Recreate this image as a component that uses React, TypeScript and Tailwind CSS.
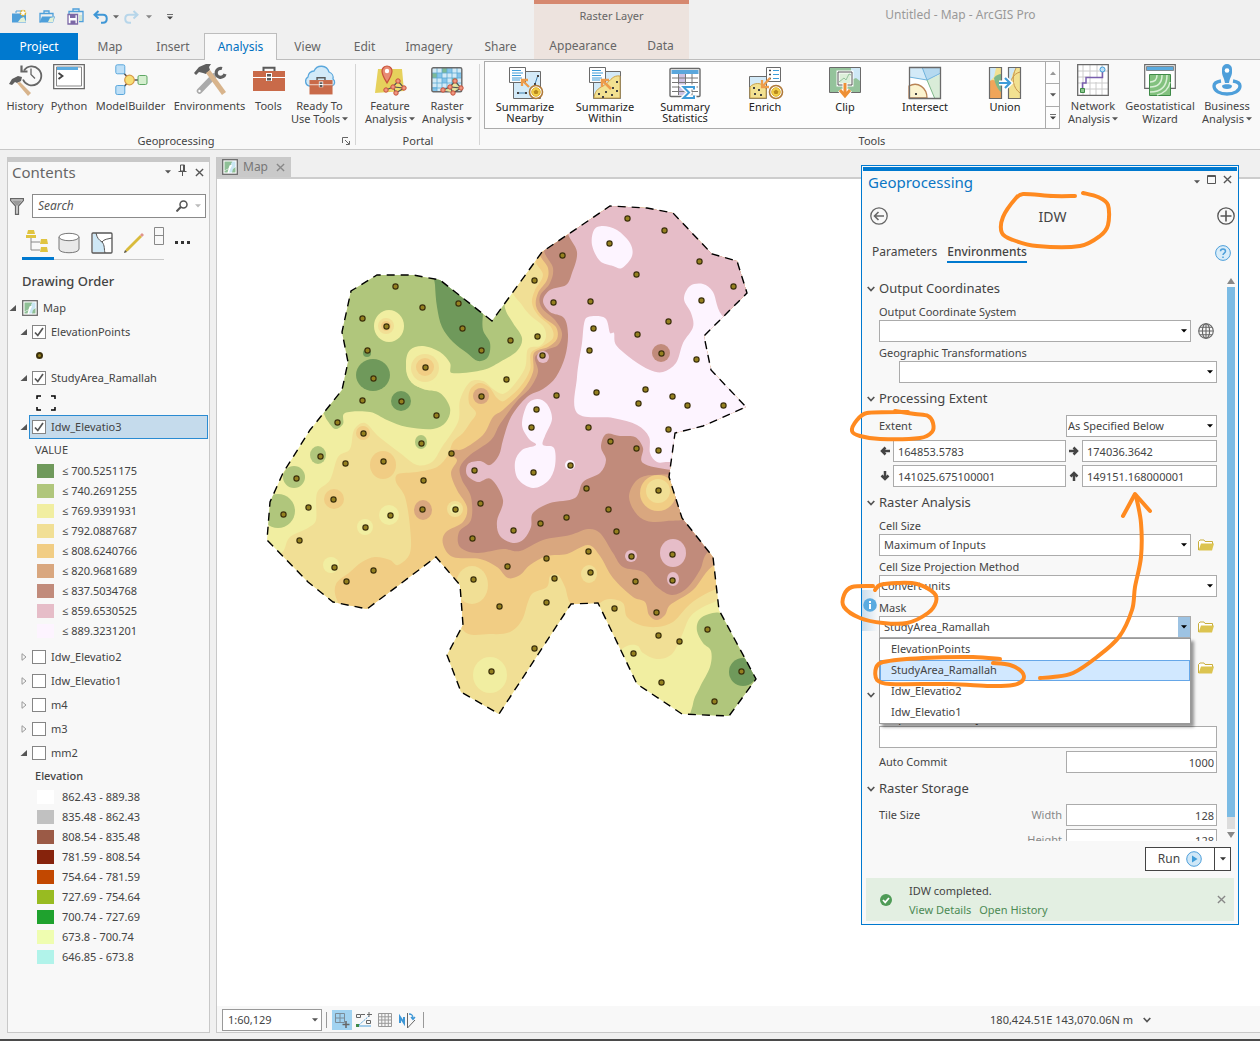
import { useState } from "react";
import type { ReactNode } from "react";
import { clsx } from "clsx";

type Pt = [number, number];

/* ---------- map data (map units are screen pixels of the view) ---------- */

const C = {
  g1: "#6f995b",
  g2: "#b0c67c",
  y1: "#f1eea1",
  y2: "#f1df95",
  o1: "#f1cd84",
  o2: "#d9a77f",
  br: "#c18b7b",
  pk: "#e6bdc8",
  wh: "#fdf4ff",
};

const outline: Pt[] = [
  [492, 321], [440, 280], [413, 275], [377, 275], [351, 291], [342, 332], [348, 362], [342, 390], [310, 430],
  [283, 473], [270, 502], [267, 540], [308, 582], [333, 602], [367, 609], [436, 557], [460, 585], [463, 625],
  [447, 655], [461, 692], [499, 714], [571, 604], [598, 603], [615, 638], [637, 684], [682, 714], [729, 716],
  [756, 679], [719, 610], [713, 557], [682, 518], [669, 477], [675, 433], [703, 426], [746, 407], [711, 370],
  [704, 336], [747, 293], [737, 261], [712, 254], [673, 213], [647, 208], [610, 206], [542, 252],
];

// Contour bands from low to high, each painted over the one before
const bands: { fill: string; pts: Pt[] }[] = [
  {
    fill: C.g2,
    pts: [
      [300, 400], [322, 412], [327, 420], [335, 429], [343, 424], [345, 413], [370, 412], [387, 420], [407, 427],
      [433, 429], [446, 422], [450, 408], [440, 393], [423, 389], [410, 380], [406, 363], [410, 350], [423, 346],
      [440, 352], [450, 363], [452, 373], [483, 370], [500, 362], [517, 351], [522, 338], [513, 323], [505, 308],
      [500, 270], [400, 240], [320, 260],
    ],
  },
  {
    fill: C.g1,
    pts: [
      [435, 270], [435, 285], [437, 307], [442, 327], [453, 342], [467, 353], [478, 361], [488, 357], [490, 343],
      [483, 330], [483, 313], [485, 290], [460, 270],
    ],
  },
  {
    fill: C.y2,
    pts: [
      [513, 286], [522, 305], [531, 316], [543, 326], [546, 337], [540, 346], [528, 349], [525, 368], [513, 386],
      [503, 394], [493, 389], [483, 381], [470, 382], [460, 400], [458, 422], [442, 447], [432, 462], [417, 465],
      [400, 453], [378, 436], [365, 423], [354, 430], [350, 449], [338, 457], [330, 480], [317, 493], [316, 520],
      [308, 528], [290, 537], [284, 550], [275, 565], [300, 640], [420, 740], [560, 740], [610, 660], [622, 649],
      [630, 645], [638, 646], [643, 653], [657, 659], [672, 654], [682, 635], [690, 617], [703, 607], [718, 600],
      [780, 560], [780, 200], [600, 180],
    ],
  },
  {
    fill: C.o1,
    pts: [
      [536, 256], [543, 275], [535, 290], [532, 303], [538, 315], [551, 327], [553, 338], [543, 346], [531, 353],
      [530, 370], [520, 387], [504, 401], [497, 398], [489, 387], [479, 383], [470, 390], [469, 403], [476, 413],
      [470, 423], [463, 433], [453, 442], [448, 455], [437, 467], [417, 472], [398, 474], [396, 482], [405, 497],
      [410, 527], [410, 553], [398, 565], [390, 560], [375, 557], [362, 562], [350, 572], [336, 584], [337, 600],
      [360, 640], [430, 590], [453, 585], [463, 630], [490, 634], [510, 632], [522, 620], [528, 602], [533, 593],
      [547, 587], [550, 576], [558, 575], [565, 587], [570, 603], [584, 620], [600, 603], [610, 599], [623, 603],
      [627, 617], [640, 625], [657, 627], [673, 622], [687, 607], [700, 597], [718, 588], [780, 560], [780, 200],
      [600, 180],
    ],
  },
  {
    fill: C.o2,
    pts: [
      [540, 248], [548, 268], [547, 280], [538, 293], [536, 306], [543, 317], [556, 327], [557, 339], [548, 347],
      [534, 353], [533, 372], [523, 390], [503, 410], [493, 417], [483, 435], [463, 449], [453, 450], [449, 454],
      [457, 460], [451, 473], [457, 490], [467, 507], [463, 522], [446, 532], [443, 544], [453, 557], [480, 559],
      [497, 567], [508, 578], [520, 575], [530, 565], [547, 556], [567, 554], [588, 545], [600, 556], [613, 578],
      [633, 597], [645, 602], [649, 615], [657, 620], [665, 615], [670, 605], [693, 590], [717, 563], [780, 540],
      [780, 200], [600, 180],
    ],
  },
  {
    fill: C.br,
    pts: [
      [545, 245], [553, 268], [550, 283], [540, 296], [542, 308], [555, 320], [562, 333], [558, 345], [546, 350],
      [535, 357], [538, 372], [530, 388], [517, 401], [500, 424], [491, 440], [470, 455], [460, 467], [462, 480],
      [471, 497], [471, 520], [459, 532], [460, 547], [477, 553], [503, 549], [520, 551], [543, 540], [570, 535],
      [588, 529], [600, 533], [613, 553], [623, 567], [643, 572], [657, 587], [672, 595], [687, 588], [700, 570],
      [708, 552], [780, 500], [780, 200], [600, 180],
    ],
  },
  {
    fill: C.pk,
    pts: [
      [568, 226], [577, 252], [572, 273], [566, 285], [550, 290], [543, 301], [550, 312], [564, 318], [568, 335],
      [565, 357], [556, 377], [543, 389], [527, 397], [511, 417], [503, 440], [499, 455], [490, 465], [480, 461],
      [468, 464], [467, 475], [478, 482], [491, 479], [503, 500], [497, 521], [500, 536], [513, 543], [524, 539],
      [531, 527], [533, 513], [550, 503], [575, 498], [583, 482], [600, 473], [606, 460], [601, 447], [606, 434],
      [620, 436], [635, 437], [643, 448], [643, 463], [672, 470], [780, 480], [780, 200], [600, 180],
    ],
  },
  {
    fill: C.wh,
    pts: [
      [588, 317], [605, 318], [610, 333], [614, 333], [616, 345], [633, 360], [650, 370], [663, 372], [676, 363],
      [683, 343], [693, 327], [691, 313], [684, 299], [690, 286], [703, 284], [713, 292], [725, 318], [780, 340],
      [780, 440], [690, 462], [668, 462], [657, 462], [650, 453], [649, 437], [637, 425], [613, 418], [577, 413],
      [577, 377], [582, 343], [584, 324],
    ],
  },
  {
    fill: C.wh,
    pts: [
      [603, 226], [594, 230], [592, 245], [600, 261], [613, 266], [622, 268], [632, 256], [630, 243], [617, 230],
    ],
  },
  {
    fill: C.wh,
    pts: [
      [537, 399], [527, 405], [522, 425], [529, 439], [536, 445], [522, 450], [515, 462], [518, 479], [533, 488],
      [548, 481], [555, 466], [554, 448], [543, 445], [545, 436], [552, 419], [547, 404],
    ],
  },
  {
    fill: C.o2,
    pts: [
      [680, 479], [653, 475], [637, 480], [629, 496], [635, 512], [647, 521], [667, 521], [690, 515],
    ],
  },
  {
    fill: C.g2,
    pts: [
      [722, 614], [709, 614], [699, 620], [697, 631], [703, 643], [711, 651], [710, 667], [700, 687], [693, 704],
      [693, 730], [760, 730], [790, 660],
    ],
  },
];

// x, y, rx, ry, fill
const spots: [number, number, number, number, string][] = [
  [389, 326, 15, 16, C.y1], [386, 326, 8, 8, C.y2], [386, 326, 5, 5, C.o1],
  [424, 368, 18, 20, C.y1], [425, 368, 14, 14, C.y2], [425, 367, 9, 9, C.o1],
  [373, 375, 17, 16, C.g1], [401, 401, 10, 10, C.g1], [367, 353, 4, 4, C.g1],
  [481, 396, 8, 8, C.o2], [363, 433, 7, 7, C.o1],
  [421, 442, 6, 7, C.g2], [318, 455, 8, 9, C.g2], [294, 477, 11, 11, C.g2], [278, 511, 17, 17, C.g2],
  [383, 465, 13, 14, C.o1], [334, 499, 10, 10, C.o1], [423, 510, 9, 10, C.o2],
  [455, 509, 8, 8, C.y2], [455, 509, 5, 5, C.y1],
  [389, 515, 10, 10, C.y1], [365, 527, 8, 8, C.y1], [331, 565, 8, 8, C.y1],
  [472, 585, 16, 19, C.y2], [490, 675, 17, 18, C.y1], [589, 574, 8, 9, C.y2],
  [658, 493, 18, 18, C.o1], [658, 491, 12, 12, C.y2],
  [661, 353, 9, 9, C.br], [543, 357, 6, 6, C.pk], [673, 553, 13, 14, C.pk],
  [673, 579, 6, 7, C.pk], [631, 556, 6, 6, C.pk], [570, 465, 5, 5, C.wh], [743, 672, 14, 14, C.g1],
];

const samples: Pt[] = [
  [395, 286], [422, 307], [458, 303], [362, 318], [386, 326], [462, 328], [510, 340], [367, 350], [481, 350],
  [425, 367], [373, 378], [506, 379], [481, 396], [362, 400], [401, 401], [436, 415], [337, 422], [363, 433],
  [421, 443], [320, 456], [627, 218], [664, 230], [609, 243], [562, 255], [699, 261], [636, 274], [534, 280],
  [733, 286], [553, 302], [590, 301], [701, 300], [668, 321], [593, 328], [637, 334], [537, 336], [589, 350],
  [661, 353], [542, 355], [696, 359], [645, 389], [596, 392], [556, 395], [672, 396], [638, 403], [687, 405],
  [723, 405], [536, 409], [531, 427], [588, 427], [668, 429], [610, 441], [636, 448], [658, 450], [296, 478],
  [345, 463], [383, 461], [451, 453], [423, 480], [474, 470], [333, 499], [308, 507], [283, 514], [422, 509],
  [455, 509], [480, 503], [390, 515], [365, 527], [299, 540], [472, 538], [513, 530], [334, 567], [373, 570],
  [346, 581], [473, 579], [507, 566], [499, 606], [491, 671], [533, 472], [570, 465], [658, 490], [586, 488],
  [540, 523], [566, 517], [608, 509], [616, 531], [588, 551], [546, 558], [631, 556], [672, 554], [590, 572],
  [554, 578], [635, 581], [672, 580], [546, 602], [614, 608], [656, 612], [658, 635], [679, 641], [707, 629],
  [534, 648], [633, 653], [661, 682], [741, 671], [714, 701],
];

// Catmull-Rom spline through the points
function smooth(pts: Pt[], closed = true) {
  const n = pts.length;
  const at = (i: number) => (closed ? pts[(i + n) % n]! : pts[Math.max(0, Math.min(n - 1, i))]!);
  let d = `M${pts[0]![0]} ${pts[0]![1]}`;
  for (let i = 0; i < (closed ? n : n - 1); i++) {
    const [a, b, c, e] = [at(i - 1), at(i), at(i + 1), at(i + 2)];
    // keep handles shorter than the segment so far-off points do not overshoot
    const len = Math.hypot(c[0] - b[0], c[1] - b[1]);
    const handle = (p: Pt, q: Pt): Pt => {
      const v: Pt = [(q[0] - p[0]) / 6, (q[1] - p[1]) / 6];
      const l = Math.hypot(v[0], v[1]) || 1;
      const k = Math.min(1, (len * 0.4) / l);
      return [v[0] * k, v[1] * k];
    };
    const h1 = handle(a, c);
    const h2 = handle(b, e);
    d += `C${b[0] + h1[0]} ${b[1] + h1[1]} ${c[0] - h2[0]} ${c[1] - h2[1]} ${c[0]} ${c[1]}`;
  }
  return closed ? d + "Z" : d;
}

function MapCanvas() {
  const ring = outline.map((p) => p.join(",")).join(" ");
  return (
    <svg
      viewBox="217 179 560 560"
      className="block h-[560px] w-[560px] shrink-0"
      role="img"
      aria-label="IDW elevation surface of the study area"
    >
      <defs>
        <clipPath id="study">
          <polygon points={ring} />
        </clipPath>
      </defs>
      <g clipPath="url(#study)">
        <rect x="217" y="179" width="560" height="560" fill={C.y1} />
        {bands.map((b, i) => (
          <path key={i} d={smooth(b.pts)} fill={b.fill} />
        ))}
        {spots.map(([x, y, rx, ry, fill], i) => (
          <ellipse key={i} cx={x} cy={y} rx={rx} ry={ry} fill={fill} />
        ))}
      </g>
      <polygon points={ring} fill="none" stroke="#000" strokeWidth="1.4" strokeDasharray="8 6" />
      {samples.map(([x, y], i) => (
        <circle key={i} cx={x + 0.5} cy={y + 0.5} r="2.6" fill="#94801f" stroke="#3d310c" strokeWidth="1.2" />
      ))}
    </svg>
  );
}

/* ---------- small glyphs ---------- */

function Caret({ className = "fill-[#555]" }: { className?: string }) {
  return (
    <svg viewBox="0 0 8 5" className={clsx("inline-block h-[4px] w-[6px] shrink-0", className)} aria-hidden>
      <path d="M0 0h8L4 4.6z" />
    </svg>
  );
}

function Cross({ className = "stroke-[#555]" }: { className?: string }) {
  return (
    <svg viewBox="0 0 10 10" className={clsx("size-[9px]", className)} fill="none" strokeWidth="1.5" aria-hidden>
      <path d="M1 1l8 8M9 1L1 9" />
    </svg>
  );
}

function MapGlyph() {
  return (
    <svg viewBox="0 0 16 16" className="size-4 shrink-0" aria-hidden>
      <rect x=".7" y=".7" width="14.6" height="14.6" fill="#fff" stroke="#6a6a6a" strokeWidth="1.3" />
      <path d="M2.500 2.500h8l-1 3-2 1-1 3-4 2z" fill="#8fbf96" />
      <path d="M10.500 2.500h3v5l-2 2-1 4H7l1-3 2-4-1-2z" fill="#c9e6f3" />
      <path d="M2.500 12l4-2-1 3.500h-3zM11 10l2.500-2v5.500H10z" fill="#8fbf96" />
    </svg>
  );
}

function Folder() {
  return (
    <svg viewBox="0 0 16 12" className="h-3 w-4 shrink-0" aria-hidden>
      <path d="M.5 11V2.500L2 1h4l1 1.500h7.500V5" fill="#fff" stroke="#c9ae3c" />
      <path d="M3 4.500h13L14 11.500H.5z" fill="#dcc450" />
    </svg>
  );
}

function Chevron() {
  return (
    <svg viewBox="0 0 8 6" className="h-[6px] w-[8px] shrink-0" fill="none" stroke="#555" strokeWidth="1.7" aria-hidden>
      <path d="M.7 1L4 4.500 7.300 1" />
    </svg>
  );
}

function Icon({ children }: { children: ReactNode }) {
  return (
    <svg viewBox="0 0 32 32" className="size-8 shrink-0 overflow-visible" fill="none" aria-hidden>
      {children}
    </svg>
  );
}

/* ---------- ribbon icons ---------- */

const toolbox = (
  <>
    <path d="M10.500 7V3.800h11V7" stroke="#5a5a5a" strokeWidth="2" />
    <path d="M0 7h32v20H0z" fill="#c96a49" />
    <path d="M0 13.500h32" stroke="#fff" strokeWidth="1" />
    <path d="M13 9h6v8h-6z" fill="#fff" />
    <path d="M14 10h4v2.500h-4zM14 14h4v2.500h-4z" fill="#5a5a5a" />
  </>
);

const pageGlyph = (
  <>
    <path d="M.5.5h16v15H.5z" fill="#fff" stroke="#6a6a6a" />
    <path d="M3 3.500h9M3 6h11M3 8.500h9M3 11h10M3 13h8" stroke="#3f9cd8" />
  </>
);

const coin = (
  <>
    <circle cx="27" cy="25" r="6.500" fill="#fff" stroke="#b07a3a" strokeWidth="1.600" />
    <circle cx="27" cy="25" r="4.300" fill="#f5d24b" stroke="#e0b32c" />
    <path d="M24.500 24.500l2.500-2 2.500 2-1 2.500h-3z" fill="#b98a1d" />
  </>
);

const cluster = (
  <>
    <path d="M12 26l7-3 5-6 6 7-8 5z" fill="#f2e27a" fillOpacity=".7" />
    <path d="M12 26l7-3 5-6 6 7-8 5-3-6 11 1" stroke="#555" strokeWidth="1.200" />
    {[[12, 26], [19, 23], [24, 17], [30, 24], [22, 29]].map(([x, y]) => (
      <circle key={x} cx={x} cy={y} r="2.200" fill="#ee9680" stroke="#c8513a" />
    ))}
  </>
);

const art = {
  history: (
    <>
      <path d="M15 6.500a9.500 9.500 0 1 1-1 9" stroke="#666" strokeWidth="1.800" />
      <path d="M12.500 1.500v6h6" stroke="#666" strokeWidth="2.200" />
      <path d="M22 4.500v6l4 4" stroke="#666" strokeWidth="1.300" />
      <path d="M0 20l3-5 6-3 4 1-1 4-4 2-2-1-3 3z" fill="#5f5f5f" />
      <path d="M8 19l3-1 11 11-3 3z" fill="#d8b48c" />
    </>
  ),
  python: (
    <>
      <path d="M.7.7h30.600v24H.7z" fill="#fff" stroke="#6a6a6a" strokeWidth="1.300" />
      <path d="M3.500 3h25v19h-25z" stroke="#888" />
      <path d="M4 3h21v3H4z" fill="#5aabe0" />
      <path d="M5.500 9l4 3-4 3" stroke="#444" strokeWidth="1.800" />
    </>
  ),
  model: (
    <>
      <path d="M8 8l5 6M8 24l5-6M19 16h7" stroke="#555" strokeWidth="1.500" />
      <rect x=".8" y=".8" width="9" height="9" rx="1.500" fill="#bfe0f7" stroke="#5aa7dc" />
      <rect x=".8" y="21.500" width="9" height="9" rx="1.500" fill="#bfe0f7" stroke="#5aa7dc" />
      <circle cx="14.500" cy="16" r="4.800" fill="#f6df75" stroke="#d89a4a" strokeWidth="1.200" />
      <rect x="23" y="11.500" width="9" height="9" rx="1.500" fill="#d5efcf" stroke="#5fa765" />
    </>
  ),
  env: (
    <>
      <path d="M5.500 27L20 12" stroke="#aaa" strokeWidth="5.500" strokeLinecap="round" />
      <circle cx="5.500" cy="27" r="1.200" fill="#fff" />
      <path d="M28 4.500a4.500 4.500 0 1 0 3 5.500" stroke="#5f5f5f" strokeWidth="3.200" />
      <path d="M0 9l5-6 7-3h5l-2 3 1 3-4 4-3-1-4-1-3 3z" fill="#5f5f5f" />
      <path d="M12 9l4-3 16 22-4 3z" fill="#d8b48c" />
    </>
  ),
  tools: toolbox,
  ready: (
    <>
      <path
        d="M5 22a5 5 0 0 1-1-9 6 6 0 0 1 6-6 8 8 0 0 1 15 1 6 6 0 0 1 4 7 4 4 0 0 1-1 7z"
        fill="#d3eaf8"
        stroke="#5aa7dc"
        strokeWidth="1.300"
      />
      <g transform="translate(5.500 11) scale(.72)">{toolbox}</g>
    </>
  ),
  feature: (
    <>
      <path d="M4 5h24l2 22-29 2z" fill="#e6d15c" />
      <path d="M13 19c-3-5-5-8-5-12a5 5 0 0 1 10 0c0 4-2 7-5 12z" fill="#e88b73" stroke="#c8513a" strokeWidth="1.200" />
      <circle cx="13" cy="7" r="2.200" fill="#fff" />
      {cluster}
    </>
  ),
  raster: (
    <>
      <path d="M1 4h30v24H1z" fill="#d2eaf6" />
      <path d="M1 9h5v5H1zM11 4h5v5h-5zM21 14h5v5h-5z" fill="#7dba98" />
      <path d="M6 9h5v5H6zM16 4h5v5h-5zM1 23h5v5H1zM26 9h5v5h-5zM11 14h5v5h-5z" fill="#86c5ea" />
      <path d="M6 4v24M11 4v24M16 4v24M21 4v24M26 4v24M1 9h30M1 14h30M1 19h30M1 24h30" stroke="#5aa9d4" strokeWidth=".8" />
      <rect x=".8" y="3.800" width="30" height="24" rx="1.500" stroke="#6a6a6a" strokeWidth="1.400" />
      {cluster}
    </>
  ),
  nearby: (
    <>
      <path d="M4.500 4.500h27v27h-27z" fill="#d3eaf8" stroke="#6a6a6a" />
      <path d="M8 26h9M29 8l-3 9" stroke="#3f7fae" />
      <path d="M8 25h2v2H8zM16 25h2v2h-2zM28 8h2v2h-2zM25 16h2v2h-2z" fill="#444" />
      {pageGlyph}
      <path d="M20 20l-6-6M13 19v-6h6" stroke="#ee9c4a" strokeWidth="2.300" />
      {coin}
    </>
  ),
  within: (
    <>
      <path d="M4.500 4.500h27v27h-27z" fill="#d3eaf8" stroke="#6a6a6a" />
      <path d="M5 31c1-9 6-10 12-14 5-4 7-9 14-8v22z" fill="#f2e191" stroke="#caa24d" />
      <path d="M9 26h2v2H9zM13 29h2v2h-2zM16 24h2v2h-2zM22 27h2v2h-2zM27 23h2v2h-2zM23 20h2v2h-2zM27 14h2v2h-2z" fill="#444" />
      {pageGlyph}
      <path d="M22 22l-8-8M13 20v-7h7" stroke="#ee9c4a" strokeWidth="2.500" />
    </>
  ),
  stats: (
    <>
      <rect x="1" y="1.500" width="30" height="28" rx="1" fill="#fff" stroke="#6a6a6a" strokeWidth="1.400" />
      <path d="M2.500 3h27v4h-27z" fill="#5aa7dc" />
      <path d="M9.500 7h7v21h-7z" fill="#cfc3e3" />
      <path d="M9.500 7v21M16.500 7v21M23 7v21M3 11h26M3 15.500h26M3 20h26M3 24.500h26" stroke="#777" />
      <path d="M25 22.500V20H14.500l5.500 5.500-5.500 5.500H25v-2.500" stroke="#fff" strokeWidth="5" />
      <path d="M25 22.500V20H14.500l5.500 5.500-5.500 5.500H25v-2.500" stroke="#3f9cd8" strokeWidth="2" />
    </>
  ),
  enrich: (
    <>
      <path d="M.5 9.500h17v22H.5z" fill="#d3eaf8" stroke="#6a6a6a" />
      <path d="M1 20c3-4 12-6 16 2v9H1z" fill="#f2e191" stroke="#caa24d" />
      <path d="M4 20h2v2H4zM9 22h2v2H9zM5 26h2v2H5zM11 27h2v2h-2z" fill="#444" />
      <path d="M17.500.5h14v14h-14z" fill="#fff" stroke="#6a6a6a" />
      <path d="M20 3.500h2M20 7.500h2M20 11.500h2" stroke="#444" strokeWidth="1.500" />
      <path d="M24 3.500h6M24 7.500h6M24 11.500h6" stroke="#3f9cd8" />
      <path d="M21 11l-7 8M13 13v7h7" stroke="#ee9c4a" strokeWidth="2.300" />
      {coin}
    </>
  ),
  clip: (
    <>
      <path d="M.5.5h31v25H.5z" fill="#94c39b" stroke="#6a6a6a" />
      <path d="M22 1h9v13l-4-3-5 2z" fill="#cfe8f6" />
      <path d="M9 5h14v13H9z" fill="#dcefd9" stroke="#fff" strokeWidth="3" />
      <path d="M9 5h14v13H9z" stroke="#555" />
      <path d="M10 15l5-4 2 2 3-6 2 1" stroke="#94c39b" />
      <path d="M16 16v12M11 23l5 6 5-6" stroke="#fff" strokeWidth="5" />
      <path d="M16 16v12M11 23l5 6 5-6" stroke="#ee9035" strokeWidth="3" />
    </>
  ),
  intersect: (
    <>
      <path d="M.5.5h31v31H.5z" fill="#fff" />
      <path d="M0 0h32v5l-14 8L0 10z" fill="#d3eaf8" />
      <path d="M13 0h19v6l-14 7z" fill="#b5d9f0" />
      <path d="M18 13l14-6v25h-6z" fill="#d9ecd8" />
      <path d="M0 10l18 3 14-7M13 0l5 13" stroke="#6fb3dd" />
      <path d="M18 13l8 19" stroke="#7fb98a" />
      <path d="M0 19c9-5 18 2 18 12H0z" fill="#fbf3cf" stroke="#b98355" strokeWidth="1.300" />
      <path d="M6 26h2v2H6z" fill="#444" />
      <path d="M.5.500h31v31H.5z" stroke="#6a6a6a" strokeWidth="1.300" />
    </>
  ),
  union: (
    <>
      <path d="M.5.5h12v31H.5z" fill="#f2e191" />
      <path d="M1 1h6L5 10l-4 4z" fill="#cfe8f6" />
      <path d="M1 14c4-3 8 0 12 12v5H1z" fill="#f0a55a" />
      <path d="M5 11c2-3 5-4 7-4v18c-4-3-6-9-7-14z" fill="#7fb98a" />
      <path d="M.5.5h12v31H.5z" stroke="#6a6a6a" strokeWidth="1.200" />
      <path d="M19.500.5h12v31h-12z" fill="#f2e191" />
      <path d="M20 1h7c-4 6-5 10-4 16l-3-2z" fill="#cfe8f6" />
      <path d="M27 1c-5 10-3 20 4 25M31 5c-7 2-9 8-11 14" stroke="#c9964e" />
      <path d="M19.500.5h12v31h-12z" stroke="#6a6a6a" strokeWidth="1.200" />
      <path d="M10 16h9M16 11l5 5-5 5" stroke="#fff" strokeWidth="5" />
      <path d="M10 16h11M16 11l5 5-5 5" stroke="#3f9cd8" strokeWidth="2.200" />
    </>
  ),
  network: (
    <>
      <path d="M.7.7h30.600v30.600H.7z" fill="#fff" />
      <path d="M6 1v30M13 1v30M20 1v12M19 18v13M25 1v30M1 7h30M1 13h13M1 19h30M6 25h25" stroke="#ccc" />
      <path d="M5.500 26v-7H9v-5.500h16.500V8" stroke="#7a5fae" strokeWidth="1.500" />
      <circle cx="25.500" cy="5.500" r="2.500" fill="#bfe0f7" stroke="#3f9cd8" />
      <path d="M3.500 24.500h4v4h-4z" fill="#8ac78c" stroke="#3f8a48" />
      <path d="M.7.7h30.600v30.600H.7z" stroke="#6a6a6a" strokeWidth="1.300" />
    </>
  ),
  geostat: (
    <>
      <path d="M.7.7h30.600v23.600H.7z" fill="#fff" stroke="#6a6a6a" strokeWidth="1.200" />
      <path d="M2.500 2.500h27v4h-27z" fill="#5aabe0" stroke="#777" strokeWidth=".8" />
      <path d="M5.500 10.500h21v21h-21z" fill="#82c17e" stroke="#3f8a48" />
      <path d="M6 18c5 0 7-2 7-7M6 23c8 0 12-4 12-12M6 28c11 0 17-6 17-17M13 31c8-2 12-7 13-13" stroke="#d9efd6" strokeWidth="1.500" />
    </>
  ),
  business: (
    <>
      <path d="M10 17c-5 .8-7 2.800-7 5 0 5 6 8 13 8s13-3 13-8c0-2.200-2-4.200-7-5" stroke="#4e9fda" strokeWidth="3.300" />
      <path d="M11 22c0-2.500 10-2.500 10 0 0 2-2 3-5 3s-5-1-5-3z" fill="#4e9fda" />
      <path d="M11 5a5 5 0 0 1 10 0v3c0 4-2 5-3 11h-4c-1-6-3-7-3-11z" fill="#4e9fda" />
      <circle cx="16" cy="6.500" r="2.300" fill="#fff" />
    </>
  ),
};

/* ---------- ribbon ---------- */

type Cmd = { icon: ReactNode; lines: string[]; drop?: boolean; w: string };

const geoCmds: Cmd[] = [
  { icon: art.history, lines: ["History"], w: "w-[46px]" },
  { icon: art.python, lines: ["Python"], w: "w-[42px]" },
  { icon: art.model, lines: ["ModelBuilder"], w: "w-[81px]" },
  { icon: art.env, lines: ["Environments"], w: "w-[77px]" },
  { icon: art.tools, lines: ["Tools"], w: "w-[41px]" },
  { icon: art.ready, lines: ["Ready To", "Use Tools"], drop: true, w: "w-[61px]" },
];
const portalCmds: Cmd[] = [
  { icon: art.feature, lines: ["Feature", "Analysis"], drop: true, w: "w-[58px]" },
  { icon: art.raster, lines: ["Raster", "Analysis"], drop: true, w: "w-[56px]" },
];
const galleryCmds: Cmd[] = [
  { icon: art.nearby, lines: ["Summarize", "Nearby"], w: "w-20" },
  { icon: art.within, lines: ["Summarize", "Within"], w: "w-20" },
  { icon: art.stats, lines: ["Summary", "Statistics"], w: "w-20" },
  { icon: art.enrich, lines: ["Enrich"], w: "w-20" },
  { icon: art.clip, lines: ["Clip"], w: "w-20" },
  { icon: art.intersect, lines: ["Intersect"], w: "w-20" },
  { icon: art.union, lines: ["Union"], w: "w-20" },
];
const workflowCmds: Cmd[] = [
  { icon: art.network, lines: ["Network", "Analysis"], drop: true, w: "w-[60px]" },
  { icon: art.geostat, lines: ["Geostatistical", "Wizard"], w: "w-[74px]" },
  { icon: art.business, lines: ["Business", "Analysis"], drop: true, w: "w-[60px]" },
];

function Command({ cmd, dense }: { cmd: Cmd; dense?: boolean }) {
  return (
    <button
      type="button"
      className={clsx(
        "flex shrink-0 flex-col items-center whitespace-nowrap text-[11px]",
        dense ? "pt-[5px] leading-[11px] text-[#222]" : "pt-1 leading-[13px] text-[#444]",
        cmd.w,
      )}
    >
      <Icon>{cmd.icon}</Icon>
      <span className={clsx(dense ? "mt-[2px]" : "mt-[3px]")}>
        {cmd.lines.map((line, i) => (
          <span key={line} className="block">
            {line}
            {cmd.drop && i === cmd.lines.length - 1 ? <Caret className="mb-[2px] ml-[2px] fill-[#555]" /> : null}
          </span>
        ))}
      </span>
    </button>
  );
}

function Group({ cmds, label, launcher }: { cmds: Cmd[]; label: string; launcher?: boolean }) {
  return (
    <section className="flex shrink-0 flex-col">
      <div className="flex h-[74px]">
        {cmds.map((c) => (
          <Command key={c.lines.join()} cmd={c} />
        ))}
      </div>
      <div className="relative text-center text-[11px] leading-4 text-[#444]">
        {label}
        {launcher ? (
          <svg viewBox="0 0 8 8" className="absolute top-1 right-0 size-2" fill="none" stroke="#666" aria-hidden>
            <path d="M.5 6V.5H6M3 3l4 4M7.500 4v3.500H4" />
          </svg>
        ) : null}
      </div>
    </section>
  );
}

const tabs = [
  { label: "Map", w: "w-[64px]" },
  { label: "Insert", w: "w-[62px]" },
  { label: "Analysis", w: "w-[73px]" },
  { label: "View", w: "w-[61px]" },
  { label: "Edit", w: "w-[53px]" },
  { label: "Imagery", w: "w-[76px]" },
  { label: "Share", w: "w-[67px]" },
];

function QuickAccess() {
  return (
    <div className="flex h-[33px] items-center pl-[11px]">
      <button type="button" aria-label="New project">
        <svg viewBox="0 0 16 16" className="size-4" fill="none" aria-hidden>
          <path d="M1 4.500h14v9H1z" fill="#4e9fda" />
          <path d="M5 4V2h5v2" stroke="#4e9fda" />
          <path d="M7 13l3-4 3-1 2 5z" fill="#e3f1d8" />
          <circle cx="12" cy="4" r="2.500" fill="#fff" stroke="#e0b32c" strokeWidth="1.500" strokeDasharray="2 1" />
        </svg>
      </button>
      <button type="button" aria-label="Open project" className="ml-3">
        <svg viewBox="0 0 16 16" className="size-4" fill="none" aria-hidden>
          <path d="M1 13.500v-9h13v3M5 4V2h5v2" stroke="#4e9fda" strokeWidth="1.300" />
          <path d="M3 7.500h13l-2 6H.5z" fill="#4e9fda" />
          <path d="M9 13l2-4 4-1-1 5z" fill="#e3f1d8" />
        </svg>
      </button>
      <button type="button" aria-label="Save project" className="ml-3">
        <svg viewBox="0 0 17 17" className="size-[17px]" fill="none" aria-hidden>
          <path d="M2 6V3.500h14v10h-4M6 3V1h6v2" stroke="#4e9fda" strokeWidth="1.300" />
          <path d="M12 7h3v6h-3z" fill="#cfe5d5" />
          <path d="M1 6.500h9.500v9.500H1z" fill="#fff" stroke="#7c68a6" strokeWidth="1.300" />
          <path d="M3 7h5.500v3H3zM3.500 12.500h5V16h-5z" fill="#7c68a6" />
        </svg>
      </button>
      <button type="button" aria-label="Undo" className="ml-[9px] flex items-center gap-[5px]">
        <svg viewBox="0 0 15 14" className="h-3.5 w-[15px]" fill="none" stroke="#3f97d6" strokeWidth="2" aria-hidden>
          <path d="M5.500 1L1.500 4.800l4 3.700M1.800 4.800H10c5 0 5 8 0 8H8" />
        </svg>
        <Caret className="fill-[#666]" />
      </button>
      <button type="button" aria-label="Redo" className="ml-[5px] flex items-center gap-[7px]">
        <svg viewBox="0 0 15 14" className="h-3.5 w-[15px]" fill="none" stroke="#b7d6ea" strokeWidth="2" aria-hidden>
          <path d="M9.500 1l4 3.800-4 3.700M13.200 4.800H5c-5 0-5 8 0 8h2" />
        </svg>
        <Caret className="fill-[#888]" />
      </button>
      <button type="button" aria-label="Customize toolbar" className="ml-[15px]">
        <svg viewBox="0 0 7 7" className="size-[6px]" aria-hidden>
          <path d="M0 0h7v1H0zM0 3h7L3.500 6.500z" fill="#444" />
        </svg>
      </button>
    </div>
  );
}

function Ribbon() {
  const [active, setActive] = useState("Analysis");
  return (
    <header className="shrink-0">
      <div className="flex h-[60px] border-b border-[#bdbdbd]">
        <div className="shrink-0">
          <QuickAccess />
          <nav className="flex h-[27px] text-[12px]" aria-label="Ribbon tabs">
            <button type="button" className="w-[78px] bg-[#0079cf] text-white">
              Project
            </button>
            {tabs.map(({ label, w }) => (
              <button
                key={label}
                type="button"
                onClick={() => setActive(label)}
                className={clsx(
                  w,
                  active === label
                    ? "border border-b-0 border-[#bdbdbd] bg-[#f9f9f9] text-[#0070c0]"
                    : "border border-transparent text-[#666]",
                )}
              >
                {label}
              </button>
            ))}
          </nav>
        </div>
        <div className="flex w-[155px] shrink-0 flex-col border-t-4 border-[#d6886f] bg-[#ede3de] text-[#666]">
          <div className="h-[29px] text-center text-[11px] leading-6">Raster Layer</div>
          <div className="flex h-[27px] text-[12px]">
            <button type="button" className="w-[98px]">
              Appearance
            </button>
            <button type="button" className="flex-1">
              Data
            </button>
          </div>
        </div>
        <div className="flex-1 pr-7 text-center text-[12px] leading-[30px] text-[#999]">Untitled - Map - ArcGIS Pro</div>
      </div>
      <div className="flex h-[90px] border-b border-[#c8c8c8] bg-[#f9f9f9] pl-[2px]">
        <Group cmds={geoCmds} label="Geoprocessing" launcher />
        <div className="mx-[5px] my-1 w-px shrink-0 bg-[#d5d5d5]" />
        <Group cmds={portalCmds} label="Portal" />
        <div className="mx-1 my-1 w-px shrink-0 bg-[#d5d5d5]" />
        <section className="flex min-w-0 flex-1 flex-col">
          <div className="flex h-[74px] gap-[3px] pt-px">
            <div className="flex h-[68px] shrink-0 border border-[#ababab] bg-[#fdfdfd]">
              {galleryCmds.map((c) => (
                <Command key={c.lines.join()} cmd={c} dense />
              ))}
              <div className="flex w-[14px] flex-col divide-y divide-[#ababab] border-l border-[#ababab]">
                <button type="button" aria-label="Previous row" className="flex flex-1 items-center justify-center">
                  <Caret className="rotate-180 fill-[#999]" />
                </button>
                <button type="button" aria-label="Next row" className="flex flex-1 items-center justify-center">
                  <Caret />
                </button>
                <button type="button" aria-label="More tools" className="flex flex-1 items-center justify-center">
                  <svg viewBox="0 0 7 7" className="size-[6px]" aria-hidden>
                    <path d="M0 0h7v1H0zM0 3h7L3.500 6.500z" fill="#444" />
                  </svg>
                </button>
              </div>
            </div>
            <div className="-mt-px flex">
              {workflowCmds.map((c) => (
                <Command key={c.lines.join()} cmd={c} />
              ))}
            </div>
          </div>
          <div className="text-center text-[11px] leading-4 text-[#444]">Tools</div>
        </section>
      </div>
    </header>
  );
}

/* ---------- contents pane ---------- */

const idwLegend: [string, string][] = [
  ["bg-[#6f995b]", "≤ 700.5251175"],
  ["bg-[#b0c67c]", "≤ 740.2691255"],
  ["bg-[#f1eea1]", "≤ 769.9391931"],
  ["bg-[#f1df95]", "≤ 792.0887687"],
  ["bg-[#f1cd84]", "≤ 808.6240766"],
  ["bg-[#d9a77f]", "≤ 820.9681689"],
  ["bg-[#c18b7b]", "≤ 837.5034768"],
  ["bg-[#e6bdc8]", "≤ 859.6530525"],
  ["bg-[#fdf4ff]", "≤ 889.3231201"],
];
const mmLegend: [string, string][] = [
  ["bg-[#ffffff]", "862.43 - 889.38"],
  ["bg-[#c1c1c1]", "835.48 - 862.43"],
  ["bg-[#9b5a46]", "808.54 - 835.48"],
  ["bg-[#86230c]", "781.59 - 808.54"],
  ["bg-[#c24800]", "754.64 - 781.59"],
  ["bg-[#98bb21]", "727.69 - 754.64"],
  ["bg-[#1fa22e]", "700.74 - 727.69"],
  ["bg-[#effdb0]", "673.8 - 700.74"],
  ["bg-[#b1f3ea]", "646.85 - 673.8"],
];

function Twisty({ open }: { open: boolean }) {
  return (
    <svg viewBox="0 0 8 8" className="size-2 shrink-0" fill="none" aria-hidden>
      {open ? <path d="M7 1v6H.5z" fill="#555" /> : <path d="M2 .7l4 3.300-4 3.300z" stroke="#999" />}
    </svg>
  );
}

function Layer({ name, on, open, selected }: { name: string; on?: boolean; open?: boolean; selected?: boolean }) {
  return (
    <div className="flex h-6 items-center pl-3">
      <Twisty open={!!open} />
      <label
        className={clsx(
          "mr-px ml-[1px] flex h-6 flex-1 items-center gap-[5px] border pl-[2px]",
          selected ? "border-[#2a8bd2] bg-[#c5dbec]" : "border-transparent",
        )}
      >
        <span className="relative flex size-3.5 shrink-0">
          <input
            type="checkbox"
            defaultChecked={on}
            className="peer size-3.5 appearance-none border border-[#858585] bg-white"
          />
          <svg
            viewBox="0 0 14 14"
            className="pointer-events-none absolute inset-0 hidden size-3.5 peer-checked:block"
            fill="none"
            stroke="#555"
            strokeWidth="1.700"
            aria-hidden
          >
            <path d="M3 7.500L5.800 10.500 11 3" />
          </svg>
        </span>
        <span>{name}</span>
      </label>
    </div>
  );
}

function Legend({ rows }: { rows: [string, string][] }) {
  return (
    <ul>
      {rows.map(([color, label]) => (
        <li key={label} className="flex h-5 items-center gap-2 pl-[29px]">
          <span className={clsx("h-[14px] w-[17px]", color)} />
          {label}
        </li>
      ))}
    </ul>
  );
}

function Contents() {
  return (
    <aside className="flex w-[203px] shrink-0 flex-col border border-t-[5px] border-[#c8c8c8] bg-[#f8f8f8] text-[11px] text-[#444]">
      <div className="flex h-5 items-center pr-[5px] pl-1">
        <h2 className="flex-1 text-[15px] leading-[18px] text-[#666]">Contents</h2>
        <Caret />
        <svg viewBox="0 0 9 12" className="mb-1 mr-2 ml-[7px] h-3 w-[9px]" fill="none" stroke="#555" aria-hidden>
          <path d="M2.500 1h4v6h-4zM.5 7.500h8M4.500 8v4M5.500 1v6" />
        </svg>
        <Cross />
      </div>
      <div className="mt-3 flex items-center pr-[3px] pl-[2px]">
        <svg viewBox="0 0 14 17" className="mr-2 h-[17px] w-[14px]" aria-hidden>
          <path d="M.6.6h12.800v2L8.500 8v8.400h-3V8L.6 2.600z" fill="#d0d0d0" stroke="#666" strokeWidth="1.200" />
          <path d="M2 2.500h10L8 7.500H6z" fill="#999" />
        </svg>
        <div className="flex h-6 flex-1 items-center border border-[#8a8a8a] bg-white pr-1">
          <input
            type="search"
            aria-label="Search"
            placeholder="Search"
            className="w-0 flex-1 px-[5px] text-[12px] italic outline-none placeholder:text-[#555]"
          />
          <svg viewBox="0 0 12 12" className="size-3" fill="none" stroke="#555" aria-hidden>
            <circle cx="7.500" cy="4.500" r="3.500" strokeWidth="1.500" />
            <path d="M4.800 7L.5 11.500" strokeWidth="2" />
          </svg>
          <Caret className="ml-[7px] fill-[#bbb]" />
        </div>
      </div>
      <div className="mt-[9px] ml-[14px] flex h-[33px] w-[142px] border-b border-[#c8c8c8]">
        <button
          type="button"
          aria-label="List by drawing order"
          className="-mb-px w-8 shrink-0 border-b-[3px] border-[#0079cf] pl-1"
        >
          <svg viewBox="0 0 24 24" className="size-6" fill="none" aria-hidden>
            <path d="M5 8v12h9M5 12h9" stroke="#888" />
            <path d="M2 0h6l1 4H1zM0 5h10v3H0zM15 9h6l1 5h-8zM15 17h6l1 5h-8z" fill="#e0c440" />
          </svg>
        </button>
        <button type="button" aria-label="List by data source" className="w-8 shrink-0 pl-1">
          <svg viewBox="0 0 22 22" className="size-[22px]" fill="#e9e9e9" stroke="#777" aria-hidden>
            <path d="M1 5v12c0 5 20 5 20 0V5" />
            <ellipse cx="11" cy="5" rx="10" ry="3.700" fill="#fff" />
          </svg>
        </button>
        <button type="button" aria-label="List by selection" className="w-8 shrink-0 pl-[5px]">
          <svg viewBox="0 0 22 22" className="size-[22px]" fill="#fff" stroke="#555" aria-hidden>
            <rect x="1" y="1" width="20" height="20" rx="1" strokeWidth="1.300" />
            <path d="M2 2h3c1 4 3 6 6 8 3 3 2 8 3 10H2z" fill="#cfe8f6" stroke="none" />
            <path d="M5 1c1 5 3 7 6 9 3 3 2 8 3 11M11 10c2-3 6-3 10-4" fill="none" />
          </svg>
        </button>
        <button type="button" aria-label="List by editing" className="w-8 shrink-0 pl-[5px]">
          <svg viewBox="0 0 22 22" className="size-[22px]" aria-hidden>
            <path d="M1 21l2-4L17 3l2 2L5 19z" fill="#d9bb3c" />
            <path d="M17 3l2-2 2 2-2 2z" fill="#e0948c" />
            <path d="M1 21l1-3 2 2z" fill="#555" />
          </svg>
        </button>
        <button type="button" aria-label="List by snapping" className="flex w-6 shrink-0 pl-1">
          <svg viewBox="0 0 10 18" className="h-[18px] w-[10px]" fill="none" stroke="#888" aria-hidden>
            <path d="M.5.500h9v17h-9zM.5 8.500h9" />
          </svg>
        </button>
        <button type="button" aria-label="More" className="flex w-5 shrink-0 gap-[3px] pt-[14px] pl-px">
          <span className="size-[3px] shrink-0 bg-[#333]" />
          <span className="size-[3px] shrink-0 bg-[#333]" />
          <span className="size-[3px] shrink-0 bg-[#333]" />
        </button>
      </div>
      <h3 className="mt-[11px] ml-[14px] text-[13px] leading-5 font-medium">Drawing Order</h3>
      <div className="mt-[5px]">
        <div className="flex h-6 items-center gap-[5px] pl-px">
          <Twisty open />
          <MapGlyph />
          Map
        </div>
        <Layer name="ElevationPoints" on open />
        <div className="flex h-[22px] items-center pl-[28px]">
          <span className="size-[7px] rounded-full border-2 border-[#3d310c] bg-[#94801f]" />
        </div>
        <Layer name="StudyArea_Ramallah" on open />
        <div className="flex h-[25px] items-center pl-[28px]">
          <svg viewBox="0 0 20 16" className="h-4 w-5" fill="none" stroke="#000" strokeWidth="1.500" aria-hidden>
            <path d="M1 4V1h4M15 1h4v3M19 12v3h-4M5 15H1v-3" />
          </svg>
        </div>
        <Layer name="Idw_Elevatio3" on open selected />
        <div className="h-[22px] pl-[27px] leading-[22px]">VALUE</div>
        <Legend rows={idwLegend} />
        <div className="h-1" />
        <Layer name="Idw_Elevatio2" />
        <Layer name="Idw_Elevatio1" />
        <Layer name="m4" />
        <Layer name="m3" />
        <Layer name="mm2" open />
        <div className="h-[22px] pl-[27px] leading-[22px] font-medium">Elevation</div>
        <Legend rows={mmLegend} />
      </div>
    </aside>
  );
}

/* ---------- geoprocessing window ---------- */

const control = "h-[22px] border border-[#ababab] bg-white text-[11px] text-[#444] outline-none";

function Combo({ id, value, open, pad, className }: { id: string; value?: string; open?: boolean; pad?: string; className?: string }) {
  return (
    <div className={clsx("relative", className ?? "flex-1")}>
      <select id={id} className={clsx(control, "block w-full appearance-none", pad ?? "pl-1")}>
        <option>{value ?? ""}</option>
      </select>
      <span
        className={clsx(
          "pointer-events-none absolute inset-y-px right-px flex w-3 items-center justify-center",
          open && "bg-[#9dc3e3]",
        )}
      >
        <Caret className="fill-black" />
      </span>
    </div>
  );
}

function Section({ title, children }: { title: string; children: ReactNode }) {
  return (
    <section className="mb-1 flex flex-col gap-[3px]">
      <h3 className="flex h-6 items-center gap-1 text-[13px]">
        <Chevron />
        {title}
      </h3>
      {children}
    </section>
  );
}

function Field({ id, label, children, side }: { id: string; label: string; children: ReactNode; side?: ReactNode }) {
  return (
    <div className="pl-3">
      <label htmlFor={id} className="block h-4 leading-4">
        {label}
      </label>
      <div className="flex items-center">
        {children}
        {side ? <span className="flex w-[26px] shrink-0 pl-[7px]">{side}</span> : null}
      </div>
    </div>
  );
}

function ExtentBox({ label, value, d, className }: { label: string; value: string; d: string; className: string }) {
  return (
    <label className={clsx("flex items-center", className)}>
      <svg viewBox="0 0 10 10" className="mx-[3px] size-[10px] shrink-0" fill="none" stroke="#444" strokeWidth="2.500" aria-hidden>
        <path d={d} />
      </svg>
      <input aria-label={label} defaultValue={value} className={clsx(control, "w-0 flex-1 px-1")} />
    </label>
  );
}

const maskLayers = ["ElevationPoints", "StudyArea_Ramallah", "Idw_Elevatio2", "Idw_Elevatio1"];

const inkLines: Pt[][] = [
  [[1075, 196], [1053, 196], [1023, 194], [1016, 198], [1003, 217], [1002, 233], [1013, 240], [1037, 246], [1080, 246], [1100, 236], [1108, 225], [1108, 205], [1098, 197], [1083, 193]],
  [[895, 411], [915, 414], [928, 416], [933, 423], [932, 432], [920, 438], [880, 439], [860, 436], [852, 431], [857, 420], [867, 413], [908, 412]],
  [[875, 590], [880, 585], [897, 583], [917, 584], [934, 593], [936, 602], [928, 613], [907, 623], [883, 623], [860, 618], [844, 607], [844, 595], [852, 587], [873, 586]],
  [[1000, 659], [973, 657], [923, 658], [883, 662], [876, 668], [877, 680], [890, 684], [950, 684], [990, 686], [1013, 685], [1023, 680], [1022, 672], [1010, 665], [993, 663]],
  [[1040, 678], [1053, 677], [1073, 673], [1097, 657], [1119, 637], [1132, 610], [1135, 587], [1141, 557], [1141, 523], [1136, 496]],
];

// Hand-drawn marks over the tool window
function Ink() {
  return (
    <svg
      viewBox="862 166 376 758"
      className="pointer-events-none absolute top-0 left-0 z-20 h-[758px] w-[376px] overflow-visible"
      fill="none"
      stroke="#ff8a20"
      strokeWidth="4"
      strokeLinecap="round"
      strokeLinejoin="round"
      aria-hidden
    >
      {inkLines.map((line, i) => (
        <path key={i} d={smooth(line, false)} />
      ))}
      <path d="M1123 516L1135 494L1150 511" />
    </svg>
  );
}

function Geoprocessing() {
  const [mask, setMask] = useState("StudyArea_Ramallah");
  return (
    <div className="absolute top-[15px] right-[21px] flex w-[378px] flex-col border border-[#0079cf] bg-[#f8f8f8] text-[11px] text-[#444]">
      <div className="mx-px mt-px h-1 bg-[#0079cf]" />
      <div className="flex h-[21px] items-center gap-[7px] pr-[6px] pl-[6px]">
        <h2 className="flex-1 text-[15px] leading-[18px] text-[#0a76c4]">Geoprocessing</h2>
        <Caret />
        <svg viewBox="0 0 9 9" className="mb-1 size-[9px]" fill="none" stroke="#555" aria-hidden>
          <path d="M.5.500h8v8h-8zM0 1.500h9" />
        </svg>
        <Cross className="mb-1 stroke-[#555]" />
      </div>
      <div className="mt-[14px] flex h-5 items-center px-2">
        <button type="button" aria-label="Back">
          <svg viewBox="0 0 18 18" className="size-[18px]" fill="none" stroke="#666" strokeWidth="1.300" aria-hidden>
            <circle cx="9" cy="9" r="8.200" />
            <path d="M14 9H5M8.500 5L4.500 9l4 4" strokeWidth="1.600" />
          </svg>
        </button>
        <h1 className="flex-1 text-center text-[14px]">IDW</h1>
        <button type="button" aria-label="Add to model">
          <svg viewBox="0 0 18 18" className="-mr-[5px] size-[18px]" fill="none" stroke="#555" strokeWidth="1.300" aria-hidden>
            <circle cx="9" cy="9" r="8.200" />
            <path d="M3.500 9h11M9 3.500v11" strokeWidth="1.600" />
          </svg>
        </button>
      </div>
      <div className="mt-[17px] flex h-5 items-start gap-[10px] pr-[7px] pl-[10px] text-[12px] leading-[18px]">
        <button type="button">Parameters</button>
        <button type="button" className="border-b-2 border-[#0079cf] font-medium">
          Environments
        </button>
        <button type="button" aria-label="Help" className="ml-auto pt-[2px]">
          <svg viewBox="0 0 16 16" className="size-4" fill="#d9edf9" stroke="#4e9fda" aria-hidden>
            <circle cx="8" cy="8" r="7.400" />
            <path d="M5.500 6.300c0-3.200 5-3.200 5 0 0 1.800-2.500 1.700-2.500 3.700M8 11.500v1.500" fill="none" strokeWidth="1.500" />
          </svg>
        </button>
      </div>

      <div className="mt-3 flex h-[566px] pr-[3px]">
        <div className="min-w-0 flex-1 overflow-hidden pt-[2px] pr-[10px] pl-[5px]">
          <Section title="Output Coordinates">
            <Field
              id="ocs"
              label="Output Coordinate System"
              side={
                <svg viewBox="0 0 16 16" className="size-4" fill="none" stroke="#666" strokeWidth="1.100" aria-hidden>
                  <circle cx="8" cy="8" r="7.300" />
                  <ellipse cx="8" cy="8" rx="3.600" ry="7.300" />
                  <path d="M8 .7v14.600M.7 8h14.600M2 4.300h12M2 11.700h12" />
                </svg>
              }
            >
              <Combo id="ocs" />
            </Field>
            <Field id="geo" label="Geographic Transformations">
              <Combo id="geo" className="ml-5 flex-1" />
            </Field>
          </Section>

          <Section title="Processing Extent">
            <div className="mt-px flex items-center justify-between pl-3">
              <label htmlFor="extent">Extent</label>
              <Combo id="extent" value="As Specified Below" pad="pl-px" className="w-[151px]" />
            </div>
            <div className="flex pl-2.5">
              <ExtentBox label="Left" value="164853.5783" d="M10 5H3M5.500 1.500L2 5l3.500 3.500" className="flex-1" />
              <ExtentBox label="Right" value="174036.3642" d="M0 5h7M4.500 1.500L8 5 4.500 8.500" className="w-[151px]" />
            </div>
            <div className="flex pl-2.5">
              <ExtentBox label="Bottom" value="141025.675100001" d="M5 0v7M1.500 4.500L5 8l3.500-3.500" className="flex-1" />
              <ExtentBox label="Top" value="149151.168000001" d="M5 10V3M1.500 5.500L5 2l3.500 3.500" className="w-[151px]" />
            </div>
          </Section>

          <Section title="Raster Analysis">
            <Field id="cell" label="Cell Size" side={<Folder />}>
              <Combo id="cell" value="Maximum of Inputs" />
            </Field>
            <Field id="proj" label="Cell Size Projection Method">
              <Combo id="proj" value="Convert units" pad="pl-px" />
            </Field>
            <div className="relative">
              <span className="absolute -top-[10px] -left-[5px] flex h-[41px] w-4 items-center bg-linear-to-r from-[#c9ddec] to-[#f8f8f8] pb-3">
                <svg viewBox="0 0 14 14" className="ml-[1px] size-3.5 shrink-0" aria-hidden>
                  <circle cx="7" cy="7" r="6.800" fill="#5aabe0" />
                  <path d="M6 6h2v5H6zM6 3h2v2H6z" fill="#fff" />
                </svg>
              </span>
              <Field id="mask" label="Mask" side={<Folder />}>
                <Combo key={mask} id="mask" value={mask} open />
              </Field>
              <div
                role="listbox"
                aria-label="Mask layers"
                className="absolute top-full right-[26px] left-3 z-10 border border-[#9a9a9a] bg-white shadow-[3px_3px_3px_rgba(0,0,0,0.4)]"
              >
                {maskLayers.map((name) => (
                  <button
                    key={name}
                    type="button"
                    role="option"
                    aria-selected={name === mask}
                    onClick={() => setMask(name)}
                    className={clsx(
                      "block h-[21px] w-full border pl-[10px] text-left",
                      name === mask ? "border-[#66a7e8] bg-[#d1e8ff]" : "border-transparent",
                    )}
                  >
                    {name}
                  </button>
                ))}
              </div>
            </div>
            <Field id="snap" label="Snap Raster" side={<Folder />}>
              <Combo id="snap" />
            </Field>
          </Section>

          <Section title="Geodatabase">
            <Field id="config" label="Output CONFIG Keyword">
              <input id="config" className={clsx(control, "w-full px-1")} />
            </Field>
            <div className="flex items-center justify-between pl-3">
              <label htmlFor="commit">Auto Commit</label>
              <input id="commit" defaultValue="1000" className={clsx(control, "w-[151px] pr-[2px] text-right")} />
            </div>
          </Section>

          <Section title="Raster Storage">
            <div className="flex items-center pl-3">
              <span className="flex-1">Tile Size</span>
              <label htmlFor="tw" className="mr-1 text-[#888]">
                Width
              </label>
              <input id="tw" defaultValue="128" className={clsx(control, "w-[151px] pr-[2px] text-right")} />
            </div>
            <div className="flex items-center justify-end pl-3">
              <label htmlFor="th" className="mr-1 text-[#888]">
                Height
              </label>
              <input id="th" defaultValue="128" className={clsx(control, "w-[151px] pr-[2px] text-right")} />
            </div>
          </Section>
        </div>
        <div className="flex w-2 flex-col items-center">
          <svg viewBox="0 0 8 6" className="my-[3px] h-[6px] w-2 fill-[#888]" aria-hidden>
            <path d="M0 6h8L4 0z" />
          </svg>
          <div className="w-2 flex-1 bg-[#7bbbe4]" />
          <div className="h-3 w-2 bg-[#dcdcdc]" />
          <svg viewBox="0 0 8 6" className="my-[3px] h-[6px] w-2 fill-[#888]" aria-hidden>
            <path d="M0 0h8L4 6z" />
          </svg>
        </div>
      </div>

      <div className="mt-[6px] flex justify-end pr-[7px] text-[12px]">
        <button type="button" className="flex h-6 w-[70px] items-center justify-center gap-[6px] border border-[#444] bg-white">
          Run
          <svg viewBox="0 0 16 16" className="size-4" aria-hidden>
            <circle cx="8" cy="8" r="7.300" fill="#cfe7f7" stroke="#4e9fda" />
            <path d="M6 4.500l5.500 3.500L6 11.500z" fill="#3f9cd8" />
          </svg>
        </button>
        <button
          type="button"
          aria-label="Run options"
          className="flex h-6 w-4 items-center justify-center border border-l-0 border-[#444] bg-white"
        >
          <Caret className="fill-[#333]" />
        </button>
      </div>

      <div className="mx-1 mt-[7px] mb-[3px] flex h-[43px] items-center bg-[#e3efe2] pr-2 pl-[14px]">
        <svg viewBox="0 0 12 12" className="size-3" aria-hidden>
          <circle cx="6" cy="6" r="6" fill="#4f9b57" />
          <path d="M3 6l2.200 2.300L9 4" fill="none" stroke="#fff" strokeWidth="1.800" />
        </svg>
        <div className="ml-[17px] flex-1 leading-[19px]">
          <p>IDW completed.</p>
          <p className="flex gap-2 text-[#4c8a54]">
            <a href="#details">View Details</a>
            <a href="#history">Open History</a>
          </p>
        </div>
        <button type="button" aria-label="Dismiss">
          <Cross className="stroke-[#888]" />
        </button>
      </div>
      <Ink />
    </div>
  );
}

/* ---------- map view ---------- */

function StatusBar() {
  return (
    <div className="flex h-[27px] items-center border-b border-[#c8c8c8] bg-[#f8f8f8] pt-[2px] pr-[109px] pl-[5px] text-[11px] text-[#444]">
      <div className="relative w-[100px]">
        <select aria-label="Scale" className="block h-[22px] w-full appearance-none border border-[#999] bg-white pl-[5px]">
          <option>1:60,129</option>
        </select>
        <span className="pointer-events-none absolute inset-y-0 right-1 flex items-center">
          <Caret />
        </span>
      </div>
      <span className="mx-1 h-4 w-px bg-[#999]" />
      <button type="button" aria-label="Grid snapping" className="ml-px flex size-5 items-center justify-center bg-[#a1d3f1]">
        <svg viewBox="0 0 16 16" className="size-4" fill="none" stroke="#666" aria-hidden>
          <path d="M1.500 1.500h9v9h-9zM6 1.500v9M1.500 6h9" stroke="#7a8c99" />
          <path d="M8.500 12.500h7M12 9v7" strokeWidth="1.500" />
        </svg>
      </button>
      <button type="button" aria-label="Inference" className="ml-1">
        <svg viewBox="0 0 16 16" className="size-4" fill="none" stroke="#666" aria-hidden>
          <path d="M3 13L13 4" stroke="#4e9fda" strokeDasharray="2 1" />
          <path d="M.5 2.500h4v3h-4zM10.500 8.500h4v3h-4zM5 2.500h4M11 2.500h5M13 0v5" />
          <path d="M3 14h12" stroke="#4e9fda" />
          <path d="M0 12h3v3H0z" fill="#3f8a48" stroke="none" />
        </svg>
      </button>
      <button type="button" aria-label="Grid" className="ml-[6px]">
        <svg viewBox="0 0 14 14" className="size-3.5" fill="none" stroke="#999" aria-hidden>
          <path d="M.5.5h13v13H.5zM3.800 0v14M7 0v14M10.300 0v14M0 3.800h14M0 7h14M0 10.300h14" />
        </svg>
      </button>
      <button type="button" aria-label="Correction" className="ml-[7px]">
        <svg viewBox="0 0 17 16" className="h-4 w-[17px]" fill="none" aria-hidden>
          <path d="M1 11V5l4 6V5" stroke="#3f97d6" strokeWidth="2" />
          <path d="M8.500 1v15L16 8" stroke="#666" />
          <path d="M10 2c3 0 4 1 4 5M12 5l2 2.500L16 5" stroke="#3f97d6" strokeWidth="1.300" />
        </svg>
      </button>
      <span className="ml-[7px] h-4 w-px bg-[#999]" />
      <span className="ml-auto">180,424.51E 143,070.06N m</span>
      <span className="ml-[10px]">
        <Chevron />
      </span>
    </div>
  );
}

function MapPane() {
  return (
    <section className="flex min-w-0 flex-1 flex-col border-l border-[#c8c8c8]">
      <div className="border-b-2 border-[#cdcdcd]">
        <div className="flex h-5 w-[74px] items-center gap-[5px] bg-[#c9c9c9] pl-[5px] text-[12px] text-[#777]">
          <MapGlyph />
          Map
          <button type="button" aria-label="Close map" className="ml-[3px]">
            <Cross className="stroke-[#888]" />
          </button>
        </div>
      </div>
      <div className="min-h-0 flex-1 overflow-hidden bg-white">
        <MapCanvas />
      </div>
      <StatusBar />
    </section>
  );
}

export default function App() {
  return (
    <div className="flex min-h-screen flex-col bg-[#f0f0f0] font-['Noto_Sans','Open_Sans',sans-serif]">
      <Ribbon />
      <main className="relative flex flex-1 gap-[6px] pt-[7px] pb-[6px] pl-[7px]">
        <Contents />
        <MapPane />
        <Geoprocessing />
      </main>
      <div className="h-[2px] shrink-0 bg-[#4a4a4a]" />
    </div>
  );
}
